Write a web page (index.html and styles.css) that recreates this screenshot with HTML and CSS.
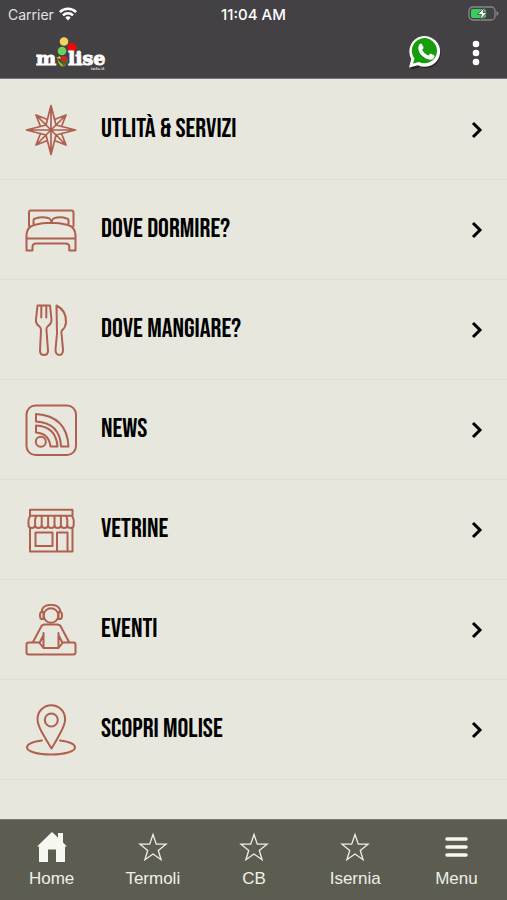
FILE: index.html
```html
<!DOCTYPE html>
<html lang="it">
<head>
<meta charset="utf-8">
<meta name="viewport" content="width=device-width, initial-scale=1">
<title>Molise</title>
<link rel="stylesheet" href="styles.css">
</head>
<body>
<header class="header">
  <div class="status">
    <div class="carrier">Carrier
      <svg width="18" height="14" viewBox="0 0 18 14" fill="none" stroke="#fff" stroke-width="2.6" aria-hidden="true"><path d="M.9 5.1a11.5 11.5 0 0 1 16.2 0M4 8.4a7 7 0 0 1 10 0"/><path d="M6.3 10.6a3.9 3.9 0 0 1 5.4 0L9 13.5z" fill="#fff" stroke="none"/></svg>
    </div>
    <div class="clock">11:04 AM</div>
    <svg class="battery" width="31" height="16" viewBox="0 0 31 16" aria-hidden="true"><rect x="1" y="1" width="26" height="13" rx="4" fill="none" stroke="#89868a" stroke-width="1.3"/><path d="M28.5 5v5q2-.8 2-2.500T28.500 5" fill="#89868a"/><rect x="3" y="3" width="15" height="9" rx="2" fill="#35cd5b"/><path d="M16.500 1.500 9.500 8.500h4l-1.500 5.500 7-7.500h-4z" fill="#fff" stroke="#444145" stroke-width=".8"/></svg>
  </div>
  <div class="toolbar">
    <a class="logo" href="#" aria-label="Molise info.it">
      <svg width="72" height="38" viewBox="0 0 72 38">
        <circle cx="28" cy="7.500" r="4.300" fill="#f4d45b"/><circle cx="36" cy="13.500" r="4.500" fill="#f20808"/><circle cx="26" cy="17" r="4.300" fill="#70d05c"/>
        <path d="M21 24q4 7 7 6t4-6q-1 8-5 8.500T21 24" fill="#a3bd31"/><path d="M20 24l5 1-1-3z" fill="#d8cb36"/><circle cx="28" cy="25.500" r="3.500" fill="#c92a20"/><path d="M25 26l4 3 3-4-1 5-4 2z" fill="#357229"/>
        <text class="wordmark" x="0" y="31">m</text><text class="wordmark" x="32" y="31">lise</text><text class="tagline" x="55" y="36">info.it</text>
      </svg>
    </a>
    <button class="whatsapp" type="button" aria-label="WhatsApp">
      <svg width="34" height="36" viewBox="0 0 34 36"><path d="M2 34 4 25a15 15 0 1 1 7 6z" transform="translate(1 1)" fill="#29272a"/><path d="M1 32.500 3.300 24a15.400 15.400 0 1 1 6.700 6.300z" fill="#fff"/><path d="M5 28.500l1.500-5a12.600 12.600 0 1 1 4.500 3.600z" fill="#159d0b"/><path d="M11.500 9.200c1-1 2-.8 2.500 0l1.500 3c.3.800-.8 1.800-1.300 2.500 1.300 2.800 3.300 4.700 6.300 5.800 1-1 1.500-2.300 2.600-1.800l3 1.500c1 .7-.2 3.200-1.700 4-3 1.500-7.700-1-10.500-3.700-2.800-2.800-5-7.500-2.400-11.300z" fill="#fff"/></svg>
    </button>
    <button class="more" type="button" aria-label="Altro">
      <svg width="8" height="26" viewBox="0 0 8 26" fill="#fff"><circle cx="4" cy="4" r="3.300"/><circle cx="4" cy="13" r="3.300"/><circle cx="4" cy="22" r="3.300"/></svg>
    </button>
  </div>
</header>

<main class="list">
  <a class="row" href="#">
    <svg class="icon" viewBox="0 0 52 52"><path stroke-width="1.700" d="M26 1.500 31 21l19.500 5L31 31l-5 19.500L21 31 1.500 26 21 21zM26 1.500v49M1.500 26h49M21 21l10 10M31 21 21 31M29.500 15.500 41 11l-4.500 11.500M41 11 31 21M22.500 15.500 11 11l4.500 11.500M11 11l10 10M29.500 36.500 41 41l-4.500-11.500M41 41 31 31M22.500 36.500 11 41l4.500-11.500M11 41l10-10"/></svg>
    <span class="label">UTLITÀ &amp; SERVIZI</span>
    <svg class="chevron" viewBox="0 0 12 18"><path d="m2 2 7 7-7 7"/></svg>
  </a>
  <a class="row" href="#">
    <svg class="icon" viewBox="0 0 52 52"><path d="M4 22V8.500q0-2 2-2h40.500q2 0 2 2V22M1.500 46.500V31Q2 23 9 21q17-4.500 34 0 7 2 7.500 10v15.500h-6.200V43q0-3.500-3.500-3.500H11q-3.500 0-3.500 3.500v3.500zM1.500 34.500h49M8.500 21v-4.500q0-2 2-2 7-2.500 14 0 1.500 1 2 4.500.5-3.500 2-4.500 7-2.500 13 0 2 0 2 2V21"/></svg>
    <span class="label">DOVE DORMIRE?</span>
    <svg class="chevron" viewBox="0 0 12 18"><path d="m2 2 7 7-7 7"/></svg>
  </a>
  <a class="row" href="#">
    <svg class="icon" viewBox="0 0 52 52"><path d="M12.500 1.500h12.500l1.500 14q.2 4-4 7-1.300 1-1 4l1.500 20q0 4.500-4 4.500t-4-4.500l1-20q0-3-1.500-4-4-3-3.500-7zM16.300 2v11.500M21.300 2v11.500M31.500 1.500q10 5 9.500 17-.5 5-4 8-1 1-.5 3l1.500 16q0 5.500-3.500 5.500-4 0-4-5.500l1.500-16z"/></svg>
    <span class="label">DOVE MANGIARE?</span>
    <svg class="chevron" viewBox="0 0 12 18"><path d="m2 2 7 7-7 7"/></svg>
  </a>
  <a class="row" href="#">
    <svg class="icon" viewBox="0 0 52 52"><rect x="1.500" y="1.500" width="49.500" height="49.500" rx="9"/><circle cx="15.800" cy="37.800" r="5"/><path d="M11 10q31 2 32.500 32.500H36Q35 19 11 17.500zM11 21.500q20 1 21.500 21h-7Q24 29.500 11 28.500z"/></svg>
    <span class="label">NEWS</span>
    <svg class="chevron" viewBox="0 0 12 18"><path d="m2 2 7 7-7 7"/></svg>
  </a>
  <a class="row" href="#">
    <svg class="icon" viewBox="0 0 52 52"><path d="M5 5.800h42.500v6H5zM5 11.800 3.500 16v5q0 3 3.300 3t3.300-3q0 3 3.300 3t3.300-3q0 3 3.200 3t3.200-3q0 3 3.200 3t3.200-3q0 3 3.200 3t3.200-3q0 3 3.200 3t3.200-3q0 3 3.200 3t3.200-3v-5l-1.500-4.200M10.100 21v-5l1-4M16.700 21v-9M23.100 21v-9M29.500 21v-9M35.900 21v-9M42.300 21v-5l-1-4M5 24v23.500h42.500V24M10.500 28.500h17v13.500h-17zM32 47.500v-19h10.500v19"/></svg>
    <span class="label">VETRINE</span>
    <svg class="chevron" viewBox="0 0 12 18"><path d="m2 2 7 7-7 7"/></svg>
  </a>
  <a class="row" href="#">
    <svg class="icon" viewBox="0 0 52 52"><circle cx="26" cy="11.500" r="7.300"/><path d="M16.500 8q1-7.200 9.500-7.200T35.500 8M18.500 8h-2q-1.500.5-1.500 3.500t1.500 3.500h2zM33.500 8h2q1.500.5 1.500 3.500t-1.500 3.500h-2zM8 38l8-15q1-2.500 4-2.500h12q3 0 4 2.500l8 15M18.500 29v15h15V29M18.500 31l-4 8 4 5M33.500 31l4 8-4 5M14.500 38.500h-11q-2 0-2 2v8q0 2 2 2h45q2 0 2-2v-8q0-2-2-2h-11"/></svg>
    <span class="label">EVENTI</span>
    <svg class="chevron" viewBox="0 0 12 18"><path d="m2 2 7 7-7 7"/></svg>
  </a>
  <a class="row" href="#">
    <svg class="icon" viewBox="0 0 52 52"><path d="M26.500 44.500q-5-8-10-17Q12.500 20 12.500 15a13.800 13.800 0 0 1 27.600 0q0 5-4 12.500-4.600 9-9.600 17z"/><circle cx="26.300" cy="16" r="6.500"/><path d="M17 36.500Q2 38.500 2 43.500c0 4 10.500 7 24 7s24-3 24-7q0-5-15-7"/></svg>
    <span class="label">SCOPRI MOLISE</span>
    <svg class="chevron" viewBox="0 0 12 18"><path d="m2 2 7 7-7 7"/></svg>
  </a>
</main>

<nav class="tabs">
  <a class="tab" href="#"><svg viewBox="0 0 32 32"><path d="M16 0 1 14.500h2V30h9V17.500h8V30h9V14.500h2l-4-4V1h-5v4.500z" fill="#f7f8f1"/></svg>Home</a>
  <a class="tab" href="#"><svg viewBox="0 0 32 32"><path class="star" d="m16 2.500 3.300 9.700h9.700l-7.700 6.200 2.800 9.300-8.100-5.700-8.100 5.700 2.800-9.300L3 12.200h9.700z"/></svg>Termoli</a>
  <a class="tab" href="#"><svg viewBox="0 0 32 32"><path class="star" d="m16 2.500 3.300 9.700h9.700l-7.700 6.200 2.800 9.300-8.100-5.700-8.100 5.700 2.800-9.300L3 12.200h9.700z"/></svg>CB</a>
  <a class="tab" href="#"><svg viewBox="0 0 32 32"><path class="star" d="m16 2.500 3.300 9.700h9.700l-7.700 6.200 2.800 9.300-8.100-5.700-8.100 5.700 2.800-9.300L3 12.200h9.700z"/></svg>Isernia</a>
  <a class="tab" href="#"><svg viewBox="0 0 32 32"><path d="M7 7h19M7 15h19M7 23h19" fill="none" stroke="#f7f8f1" stroke-width="3.500" stroke-linecap="round"/></svg>Menu</a>
</nav>
</body>
</html>
```
FILE: styles.css
```css
* {
  box-sizing: border-box;
}

body {
  margin: 0;
  min-height: 100vh;
  display: flex;
  flex-direction: column;
  background: #e7e7de;
  font-family: "Liberation Sans", Arial, sans-serif;
}

a {
  color: inherit;
  text-decoration: none;
}

button {
  display: flex;
  padding: 0;
  border: 0;
  background: none;
  cursor: pointer;
}

svg {
  display: block;
}

.header {
  background: #444145;
  color: #fff;
  border-bottom: 1px solid #77757a;
}

.status {
  display: grid;
  grid-template-columns: 1fr auto 1fr;
  align-items: center;
  height: 28px;
  padding: 0 8px;
  font-family: Inter, sans-serif;
  font-size: 14px;
}

.carrier {
  display: flex;
  align-items: center;
  gap: 5px;
  color: #e2e1e3;
}

.clock {
  font-size: 15px;
  font-weight: 500;
}

.battery {
  justify-self: end;
}

.toolbar {
  display: flex;
  align-items: center;
  height: 50px;
  padding: 0 27px 0 36px;
}

.logo {
  margin-right: auto;
}

.wordmark {
  font: bold 19px "DejaVu Serif", serif;
  fill: #fff;
  stroke: #fff;
  stroke-width: 1;
}

.tagline {
  font: bold 4px "DejaVu Serif", serif;
  fill: #d5d4d6;
}

.more {
  margin-left: 30px;
}

.list {
  flex: 1;
  padding-top: 1px;
}

.row {
  display: flex;
  align-items: center;
  height: 100px;
  padding: 0 24px 0 25px;
  border-bottom: 1px solid #dcddd6;
  color: #000;
}

.icon {
  width: 52px;
  height: 52px;
  fill: none;
  stroke: #b0604f;
  stroke-width: 2;
  stroke-linejoin: round;
  stroke-linecap: round;
}

.label {
  flex: 1;
  margin-left: 24px;
  padding-bottom: 2px;
  font: 27px "Bebas Neue", "Liberation Sans", sans-serif;
}

.chevron {
  width: 12px;
  height: 18px;
  fill: none;
  stroke: #000;
  stroke-width: 3;
}

.tabs {
  display: grid;
  grid-template-columns: repeat(5, 1fr);
  height: 81px;
  padding: 12px 0 0 1px;
  background: #5c5c50;
  border-top: 1px solid #79796e;
  color: #eff0e8;
  font-size: 17px;
  line-height: 20px;
}

.tab {
  display: flex;
  flex-direction: column;
  align-items: center;
  gap: 5px;
}

.tab svg {
  width: 32px;
  height: 32px;
}

.star {
  fill: none;
  stroke: #eff0e8;
  stroke-width: 1.3;
}
```
